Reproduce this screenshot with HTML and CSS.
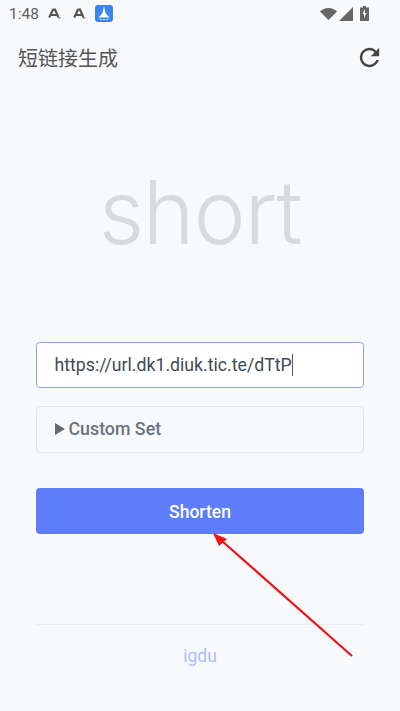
FILE: index.html
```html
<!DOCTYPE html>
<html lang="zh">
<head>
<meta charset="utf-8">
<title>短链接生成</title>
<link rel="stylesheet" href="styles.css">
</head>
<body>
<div class="status">
  <div class="status-left">
    <span class="time">1:48</span>
    <svg class="notif" viewBox="0 0 13 12"><path d="M4.500 1.500h2.500L10.500 9.500" fill="none" stroke="#555" stroke-width="2.200"/><path d="M5.200 1.200 1.200 9.500M3 7h6" fill="none" stroke="#555" stroke-width="2.200"/><path d="M10.500 11 12.500 9" stroke="#666" stroke-width="1"/></svg>
    <svg class="notif second" viewBox="0 0 13 12"><path d="M4.500 1.500h2.500L10.500 9.500" fill="none" stroke="#555" stroke-width="2.200"/><path d="M5.200 1.200 1.200 9.500M3 7h6" fill="none" stroke="#555" stroke-width="2.200"/><path d="M10.500 11 12.500 9" stroke="#666" stroke-width="1"/></svg>
    <svg class="app" viewBox="0 0 18 17"><rect width="18" height="17" rx="3" fill="#3d84ec"/><path d="M9 1 10.500 8 14.500 12.500H3.500L7.500 8z" fill="#fff"/><path d="M4.500 14.500h2.500M8 14.500h2M11 14.500h2.500" stroke="#d5e5fb" stroke-width="1.200"/></svg>
  </div>
  <div class="status-right">
    <svg class="wifi" viewBox="0 0 17 12"><path d="M0 3.500C2.200 1.200 5.200 0 8.500 0S14.800 1.200 17 3.500L8.500 12z" fill="#666"/></svg>
    <svg class="signal" viewBox="0 0 14 14"><path d="M14 0v14H0z" fill="#666"/></svg>
    <svg class="battery" viewBox="0 0 9 15"><path d="M3 0h3v1.500h3V15H0V1.500h3z" fill="#666"/><path d="M5 3 2.500 8H4v4l2.500-5H5z" fill="#fff"/></svg>
  </div>
</div>
<header class="appbar">
  <h1 class="title">短链接生成</h1>
  <svg class="refresh" viewBox="0 0 24 24"><path d="M17.650 6.350A7.960 7.960 0 0 0 12 4a8 8 0 1 0 7.730 10h-2.080A6 6 0 1 1 12 6c1.660 0 3.140.69 4.220 1.780L13 11h7V4z" fill="#444"/></svg>
</header>
<main class="content">
  <div class="logo">short</div>
  <div class="form">
    <div class="input"><span>https://url.dk1.diuk.tic.te/dTtP</span><i class="caret"></i></div>
    <div class="custom"><span class="tri"></span>Custom Set</div>
    <div class="button">Shorten</div>
  </div>
  <footer class="footer"><span class="link">igdu</span></footer>
  <svg class="arrow" viewBox="0 0 400 711"><path d="M352 656 222 541" stroke="#ee1118" stroke-width="2.200"/><path d="M213 533 227 539 219 546z" fill="#ee1118"/></svg>
</main>
</body>
</html>
```
FILE: styles.css
```css
* { box-sizing: border-box; }
html, body { margin: 0; height: 100%; }
body {
  width: 400px; height: 711px; overflow: hidden; position: relative;
  background: #f8f9fb; font-family: Roboto, "Noto Sans CJK SC", sans-serif; color: #333;
}
.status { height: 27px; display: flex; justify-content: space-between; align-items: center; padding: 0 31px 0 9px; }
.status-left, .status-right { display: flex; align-items: center; }
.time { font-size: 15.500px; color: #5f5f5f; margin-right: 9px; width: 30px; }
.notif { width: 13px; height: 12px; }
.second { margin-left: 12px; }
.app { width: 18px; height: 17px; margin-left: 9px; }
.wifi { width: 17px; height: 12px; margin-right: 2px; }
.signal { width: 14px; height: 14px; margin-right: 7px; }
.battery { width: 9px; height: 15px; }
.appbar { height: 62px; display: flex; justify-content: space-between; align-items: center; padding: 0 16px 2px 18px; }
.title { margin: 0; font-size: 20px; font-weight: 400; color: #555; font-family: "Noto Sans CJK SC", sans-serif; }
.refresh { width: 29px; height: 29px; }
.content { padding: 0 36px; }
.logo { margin-top: 78px; height: 88px; text-align: center; font-family: Inter, sans-serif; font-weight: 300; font-size: 88px; line-height: 90px; letter-spacing: -1.200px; color: #d8dadd; }
.form { margin-top: 87px; display: flex; flex-direction: column; }
.input { height: 46px; border: 1.500px solid #86a3f6; border-radius: 4px; background: #fff; padding: 0 17.500px; display: flex; align-items: center; font-size: 17.700px; color: #414a55; }
.caret { width: 1px; height: 22px; background: #555; }
.custom { margin-top: 18px; height: 47px; border: 1.500px solid #e6e7ea; border-radius: 4px; padding: 0 17.500px 2px; display: flex; align-items: center; font-size: 17.800px; font-weight: 500; color: #6b7280; }
.tri { width: 0; height: 0; border-left: 10px solid #666b73; border-top: 6px solid transparent; border-bottom: 6px solid transparent; margin-right: 4px; }
.button { margin-top: 35px; height: 46px; border-radius: 4px; background: #5d7dfb; color: #fff; display: flex; align-items: center; justify-content: center; font-size: 17.500px; font-weight: 500; padding-top: 1px; }
.footer { margin-top: 90px; height: 61px; border-top: 1px solid #ececef; display: flex; align-items: center; justify-content: center; padding-top: 1px; }
.link { font-size: 17.500px; color: #aebffa; }
.arrow { position: absolute; left: 0; top: 0; width: 400px; height: 711px; pointer-events: none; }
```
